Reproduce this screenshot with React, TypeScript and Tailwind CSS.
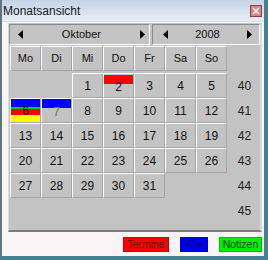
import React from "react";

type Deco = "red" | "blue" | "multi" | null;

const weeks: { wk: number; days: (number | null)[] }[] = [
  { wk: 40, days: [null, null, 1, 2, 3, 4, 5] },
  { wk: 41, days: [6, 7, 8, 9, 10, 11, 12] },
  { wk: 42, days: [13, 14, 15, 16, 17, 18, 19] },
  { wk: 43, days: [20, 21, 22, 23, 24, 25, 26] },
  { wk: 44, days: [27, 28, 29, 30, 31, null, null] },
  { wk: 45, days: [null, null, null, null, null, null, null] },
];

const heads = ["Mo", "Di", "Mi", "Do", "Fr", "Sa", "So"];

function decoFor(d: number): Deco {
  if (d === 2) return "red";
  if (d === 7) return "blue";
  if (d === 6) return "multi";
  return null;
}

const cellCls =
  "relative h-[25px] w-[31px] flex items-center justify-center border border-t-white border-l-white border-r-[#a4a4a4] border-b-[#a4a4a4]";

function Arrow({ dir }: { dir: "l" | "r" }) {
  return (
    <svg width="5" height="9" viewBox="0 0 5 9" className="shrink-0">
      {dir === "l" ? (
        <polygon points="5,0 5,9 0,4.5" fill="#000" />
      ) : (
        <polygon points="0,0 0,9 5,4.5" fill="#000" />
      )}
    </svg>
  );
}

function DayCell({ d }: { d: number | null }) {
  if (d === null) return <div className="h-[25px] w-[31px]" />;
  const deco = decoFor(d);
  return (
    <div className={cellCls}>
      {deco === "red" && (
        <div className="absolute left-0 right-0 top-[1px] h-[9px] bg-[#ff0000]" />
      )}
      {deco === "blue" && (
        <div className="absolute left-0 right-0 top-0 h-[9px] bg-[#0000ff]" />
      )}
      {deco === "multi" && (
        <div className="absolute inset-0 flex flex-col">
          <div className="h-[8px] bg-[#0000ff]" />
          <div className="h-[2px] bg-[#00d000]" />
          <div className="h-[6px] bg-[#ff0000]" />
          <div className="flex-1 bg-[#ffff00]" />
        </div>
      )}
      <span
        className={
          "relative text-[12px] leading-none " +
          (d === 7 ? "text-[#6a6a6a] mt-[3px]" : d === 2 ? "text-[#111] mt-[2px]" : "text-[#111]")
        }
      >
        {d}
      </span>
    </div>
  );
}

export default function App() {
  return (
    <div className="w-[268px] h-[260px] flex flex-col bg-[#f9f4f6] border-l-2 border-l-[#5d7686] border-r-4 border-r-[#3f7f8f] border-b-4 border-b-[#3f7f8f] font-['Liberation_Sans',Arial,sans-serif] overflow-hidden">
      {/* Title bar */}
      <div className="h-[22px] shrink-0 flex items-center justify-between pl-[1px] pr-[2px] bg-gradient-to-b from-[#c4d3e6] to-[#e8eef6] border-b border-b-[#d6dce4]">
        <span className="text-[12px] text-[#141a22] leading-none">Monatsansicht</span>
        <div className="w-[12px] h-[12px] border border-[#9a3c3c] bg-[#d98484] flex items-center justify-center">
          <svg width="8" height="8" viewBox="0 0 8 8">
            <path d="M1 1 L7 7 M7 1 L1 7" stroke="#fff" strokeWidth="1.6" />
          </svg>
        </div>
      </div>

      {/* Panel */}
      <div className="mt-[1px] ml-[6px] mr-[2px] h-[209px] shrink-0 bg-[#c3c3c3] border-l border-l-[#dcdcdc] border-r-2 border-r-[#d8d8d8] border-b-2 border-b-[#7c7c7c] flex flex-col">
        {/* Navigation */}
        <div className="mt-[1px] flex gap-[2px] h-[21px]">
          <div className="w-[142px] flex items-center pl-[8px] pr-[4px] border border-t-[#8a8a8a] border-l-[#8a8a8a] border-r-white border-b-white">
            <Arrow dir="l" />
            <span className="flex-1 text-center text-[11px] leading-none text-[#111]">Oktober</span>
            <Arrow dir="r" />
          </div>
          <div className="w-[109px] flex items-center pl-[10px] pr-[7px] border border-t-[#8a8a8a] border-l-[#8a8a8a] border-r-white border-b-white">
            <Arrow dir="l" />
            <span className="flex-1 text-center text-[11px] leading-none text-[#111]">2008</span>
            <Arrow dir="r" />
          </div>
        </div>

        {/* Header */}
        <div className="mt-[1px] ml-[1px] flex">
          {heads.map((h) => (
            <div key={h} className={cellCls}>
              <span className="text-[11px] leading-none text-[#111]">{h}</span>
            </div>
          ))}
        </div>

        {/* Weeks */}
        <div className="mt-[2px] ml-[1px] flex flex-col">
          {weeks.map((w) => (
            <div key={w.wk} className="flex">
              {w.days.map((d, i) => (
                <DayCell key={i} d={d} />
              ))}
              <div className="h-[25px] flex-1 flex items-center justify-center pl-[2px]">
                <span className="text-[12px] leading-none text-[#222]">{w.wk}</span>
              </div>
            </div>
          ))}
        </div>
      </div>

      {/* Legend */}
      <div className="mt-[5px] pr-[2px] flex justify-end gap-[11px]">
        <div className="w-[46px] h-[15px] bg-[#ff0000] border border-[#d00000] flex items-center justify-center">
          <span className="text-[10.5px] leading-none text-[#700000]">Termine</span>
        </div>
        <div className="w-[28px] h-[15px] bg-[#0000f0] border border-[#0000c0] flex items-center justify-center">
          <span className="text-[10.5px] leading-none text-[#000090]">Alle</span>
        </div>
        <div className="w-[43px] h-[15px] bg-[#00f000] border border-[#00c000] flex items-center justify-center">
          <span className="text-[10.5px] leading-none text-[#104010]">Notizen</span>
        </div>
      </div>
    </div>
  );
}
